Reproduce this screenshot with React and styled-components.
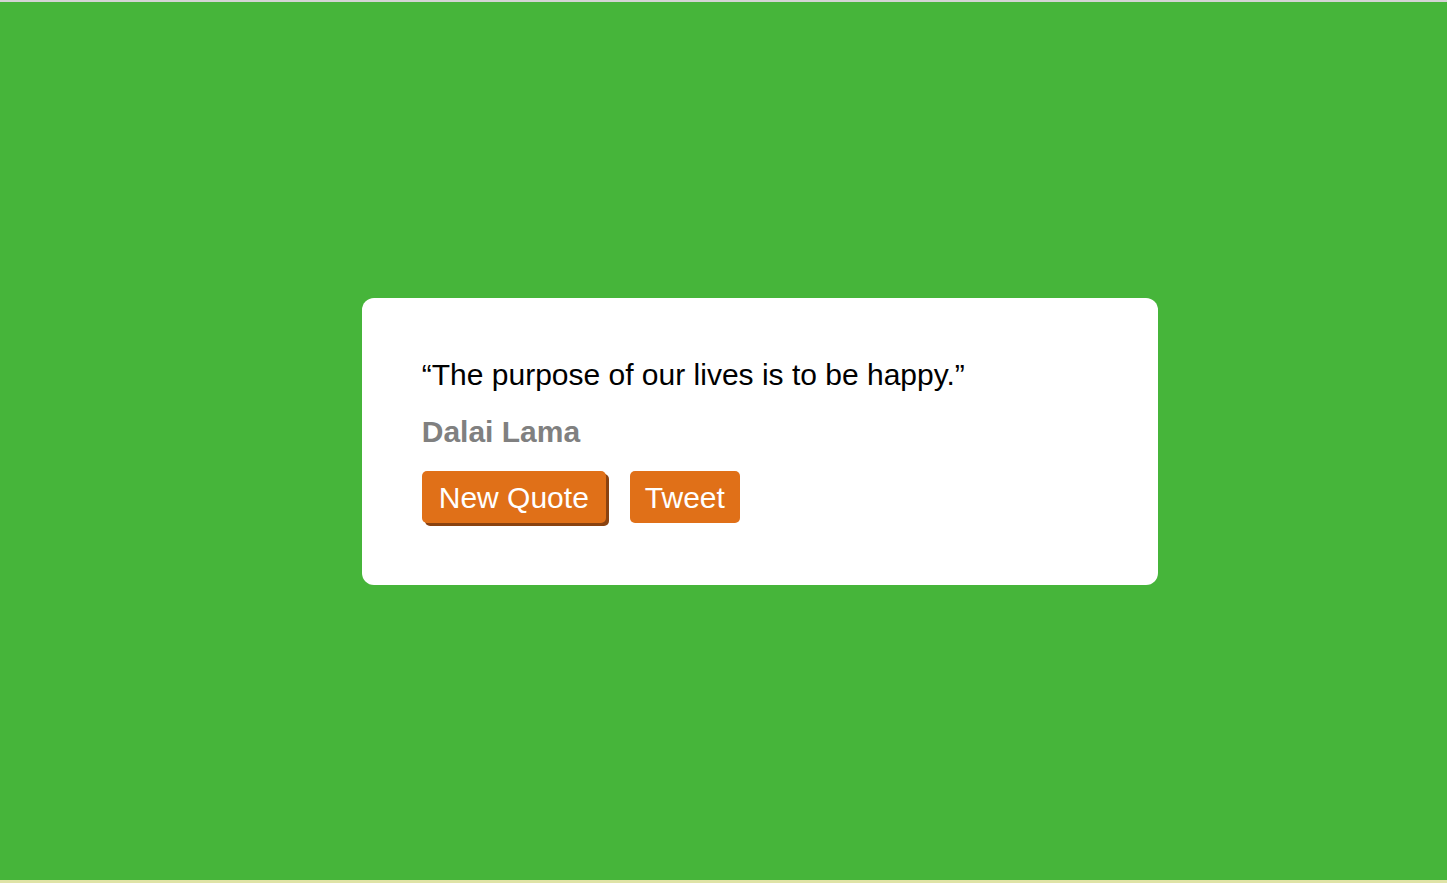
import React from "react";
import styled, { createGlobalStyle } from "styled-components";

const Global = createGlobalStyle`
  html, body { margin: 0; padding: 0; height: 100%; }
  body { font-family: "Liberation Sans", Arial, sans-serif; background: #46b53a; }
  #root { height: 100%; }
`;

const Page = styled.div`
  box-sizing: border-box;
  height: 883px;
  background: #46b53a;
  border-top: 2px solid #d4d4d4;
  border-bottom: 3px solid #dfe3a6;
  display: flex;
  align-items: center;
`;

const Card = styled.div`
  box-sizing: border-box;
  margin-left: 25%;
  width: 55%;
  height: 287px;
  background: #fff;
  border-radius: 12px;
  padding: 57px 60px 60px;
  display: flex;
  flex-direction: column;
`;

const Quote = styled.p`
  margin: 0;
  font-size: 30px;
  line-height: 40px;
  color: #000;
`;

const Author = styled.p`
  margin: 17px 0 0;
  font-size: 30px;
  line-height: 40px;
  font-weight: bold;
  color: #808080;
`;

const Buttons = styled.div`
  display: flex;
  gap: 24px;
  margin-top: 19px;
`;

const Button = styled.button`
  font-family: "Liberation Sans", Arial, sans-serif;
  font-size: 30px;
  color: #fff;
  background: #e07018;
  border: none;
  border-radius: 5px;
  height: 52px;
  padding: 2px ${(p) => (p.$wide ? "17px" : "15px")} 0;
  box-shadow: ${(p) => (p.$raised ? "3px 3px 0 #8a4210" : "none")};
  cursor: pointer;
`;

export default function App() {
  return (
    <>
      <Global />
      <Page>
        <Card>
          <Quote>“The purpose of our lives is to be happy.”</Quote>
          <Author>Dalai Lama</Author>
          <Buttons>
            <Button $raised $wide>New Quote</Button>
            <Button>Tweet</Button>
          </Buttons>
        </Card>
      </Page>
    </>
  );
}
